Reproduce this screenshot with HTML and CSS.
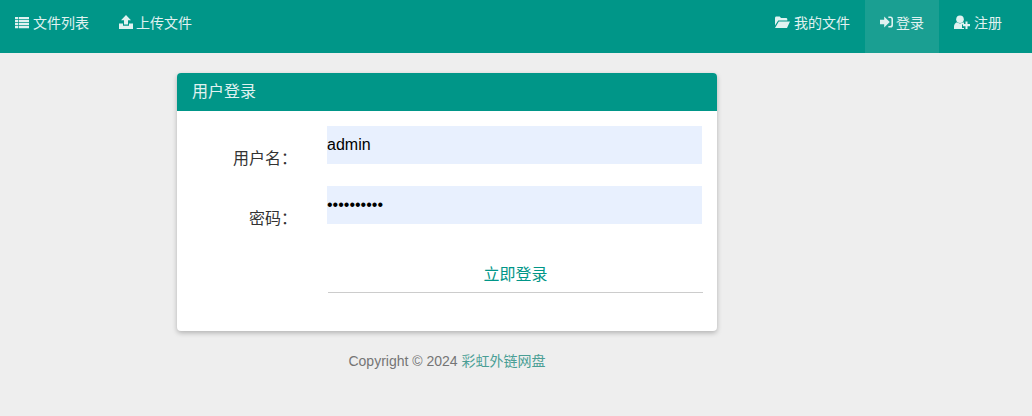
FILE: index.html
```html
<!DOCTYPE html>
<html lang="zh-CN">

<head>
    <meta charset="UTF-8">
    <meta name="viewport" content="width=device-width, initial-scale=1.0">
    <title>用户登录</title>
    <link rel="stylesheet" href="styles.css">
</head>

<body>

    <nav class="navbar">
        <ul class="nav-list">
            <li><a href="#" class="nav-link">
                <svg class="nav-icon" viewBox="0 0 14 14"><path d="M0 2h3.300v2.300H0zM4 2h10v2.300H4zM0 5h3.300v2.300H0zM4 5h10v2.300H4zM0 8h3.300v2.300H0zM4 8h10v2.300H4zM0 11h3.300v2.300H0zM4 11h10v2.300H4z"/></svg>文件列表</a></li>
            <li><a href="#" class="nav-link">
                <svg class="nav-icon nav-icon-tight" viewBox="0 0 14 14"><path d="M7 0l5 5.200H9v4.300H5V5.200H2zM0 8.500h4v2.300h6V8.500h4V14H0z"/></svg>上传文件</a></li>
        </ul>
        <ul class="nav-list">
            <li><a href="#" class="nav-link">
                <svg class="nav-icon nav-icon-wide" viewBox="0 0 15 14"><path d="M0 3C0 2.200.6 1.500 1.400 1.500h3.300L6 3h5c.8 0 1.300.6 1.300 1.300V5.500H3.200L0 10.500zM3.800 6.500H15l-3 6.500H0z"/></svg>我的文件</a></li>
            <li><a href="#" class="nav-link active">
                <svg class="nav-icon nav-icon-small" viewBox="0 0 14 14"><path d="M0 4.700h4.500V1l6 6-6 6V9.300H0zM9 1h2.500C12.900 1 14 2.100 14 3.500v7c0 1.400-1.100 2.500-2.500 2.500H9v-1.800h2c.8 0 1.300-.5 1.300-1.200V4c0-.7-.5-1.200-1.300-1.200H9z"/></svg>登录</a></li>
            <li><a href="#" class="nav-link">
                <svg class="nav-icon nav-icon-wider" viewBox="0 0 16 14"><circle cx="6" cy="4.200" r="3.800"/><path d="M0 14v-2.500C0 9.300 1.500 7.800 3 7.300 3.800 8 4.800 8.500 6 8.500s2.200-.5 3-1.200l1 .5V9.500H8V13h2v1zM11.500 6.500h2V9H16v2.300h-2.500V14h-2v-2.700H9V9h2.500z"/></svg>注册</a></li>
        </ul>
    </nav>

    <main class="content">
        <section class="card">
            <h3 class="card-heading">用户登录</h3>
            <form class="card-body">
                <div class="form-row">
                    <label class="form-label" for="username">用户名：</label>
                    <input class="form-control" id="username" type="text" value="admin">
                </div>
                <div class="form-row">
                    <label class="form-label" for="password">密码：</label>
                    <input class="form-control" id="password" type="password" value="1234567890">
                </div>
                <div class="form-actions">
                    <button type="submit" class="btn-login">立即登录</button>
                </div>
            </form>
        </section>
        <p class="copyright">Copyright © 2024 <a href="#">彩虹外链网盘</a></p>
    </main>

</body>
</html>
```

FILE: styles.css
```css
* {
    box-sizing: border-box;
}

body {
    margin: 0;
    font-family: "Liberation Sans", "Noto Sans CJK SC", sans-serif;
    font-size: 14px;
    color: #333;
    background-color: #eee;
}

.navbar {
    display: flex;
    justify-content: space-between;
    height: 53px;
    padding-right: 15px;
    background-color: #009688;
}

.nav-list {
    display: flex;
    margin: 0;
    padding: 0;
    list-style: none;
}

.nav-link {
    display: flex;
    align-items: center;
    height: 53px;
    padding: 0 15px 10px;
    color: #e0f2f1;
    text-decoration: none;
}

.nav-link.active {
    background-color: #1a9f92;
}

.nav-icon {
    width: 14px;
    height: 14px;
    margin-right: 4px;
    fill: #e0f2f1;
}

.nav-icon-tight {
    margin-right: 3px;
}

.nav-icon-small {
    width: 13px;
    margin-right: 3px;
}

.nav-icon-wide {
    width: 15px;
}

.nav-icon-wider {
    width: 16px;
}

.content {
    width: 540px;
    margin-left: 177px;
    padding-top: 20px;
}

.card {
    height: 258px;
    background-color: #fff;
    border-radius: 4px;
    box-shadow: 0 2px 5px rgba(0, 0, 0, 0.25);
}

.card-heading {
    height: 38px;
    margin: 0;
    padding: 0 15px;
    font-size: 16px;
    font-weight: 400;
    line-height: 37px;
    color: #e0f2f1;
    background-color: #009688;
    border-radius: 4px 4px 0 0;
}

.card-body {
    padding: 15px;
}

.form-row {
    display: flex;
    margin-bottom: 17px;
}

.form-label {
    flex-shrink: 0;
    width: 135px;
    padding: 23px 30px 0 0;
    font-size: 16px;
    line-height: 20px;
    text-align: right;
}

.form-control {
    flex: 1;
    height: 38px;
    padding: 0;
    font-family: inherit;
    font-size: 16px;
    color: #000;
    background-color: #e8f0fe;
    border: none;
    outline: 0;
}

.form-actions {
    margin: 27px -1px 0 136px;
}

.btn-login {
    display: block;
    width: 100%;
    height: 37px;
    padding: 0 0 3px;
    font-family: inherit;
    font-size: 16px;
    color: #009688;
    background: none;
    border: none;
    border-bottom: 1px solid #ccc;
    cursor: pointer;
}

.copyright {
    margin: 20px 0 0;
    font-size: 14px;
    line-height: 20px;
    color: #757575;
    text-align: center;
}

.copyright a {
    color: #4a9e95;
    text-decoration: none;
}
```
